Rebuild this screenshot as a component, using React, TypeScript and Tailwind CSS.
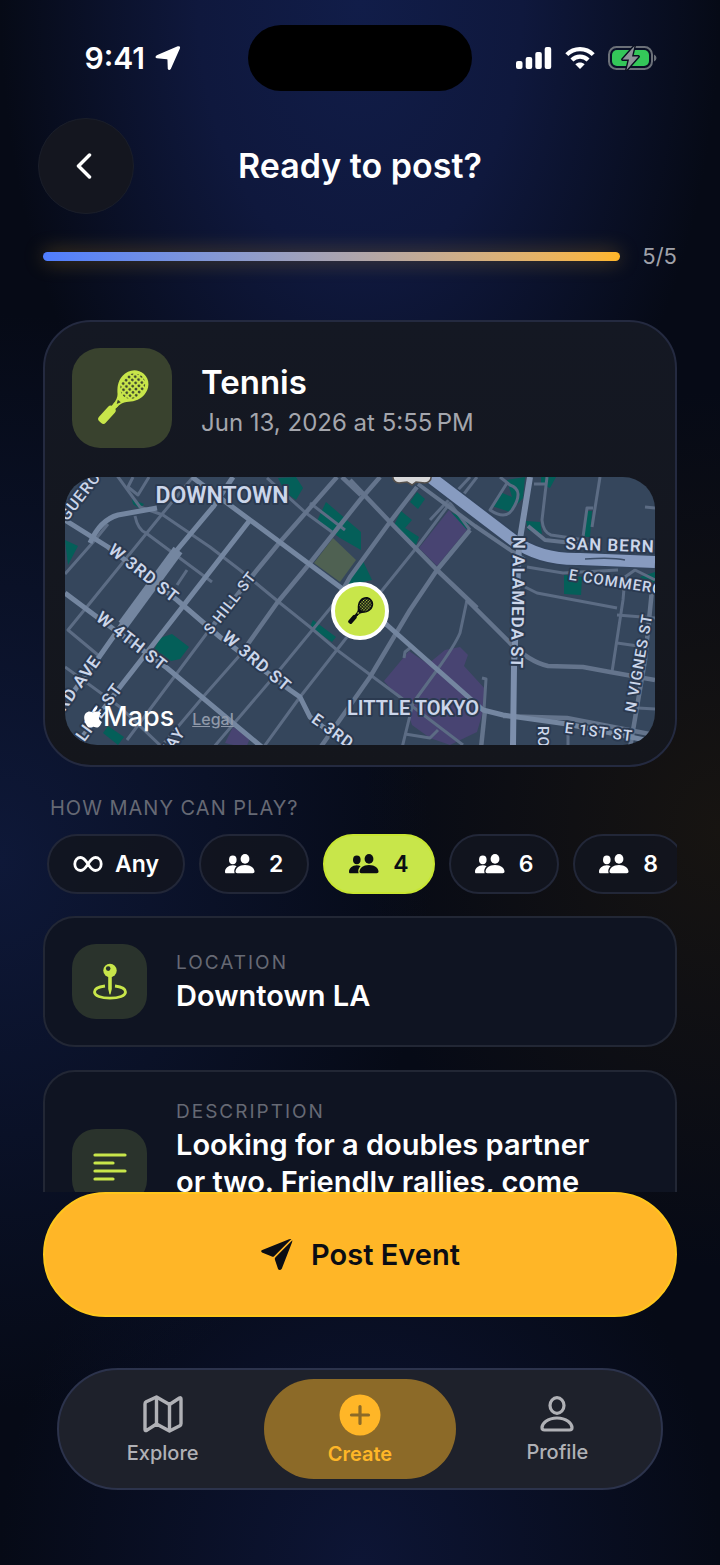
import { useId, useState } from 'react'
import type { ReactNode } from 'react'
import { FaApple } from 'react-icons/fa'

interface IconProps {
  className?: string
}

interface RoadLabel {
  text: string
  x: number
  y: number
  angle: number
  size: number
  weight?: number
}

const MINOR_ROADS = [
  'M113 470 L140 507 L163 515 L210 547 L240 570 L280 603 L310 627 L337 650 L400 697 L463 745',
  'M65 667 L120 707 L163 748',
  'M193 477 L163 513 L90 603 L68 630 L98 655',
  'M257 570 L207 633 L127 740',
  'M240 655 L203 697 L160 748',
  'M337 600 L277 673 L213 748',
  'M347 637 L300 697 L263 748',
  'M65 574 L95 540 L108 524',
  'M149 477 L138 495 L128 487 L133 477',
  'M135 516 Q138 530 146 533 L212 582',
  'M177 585 L187 570',
  'M267 478 L306 513 L332 532',
  'M310 503 L345 530',
  'M380 593 L417 547 L450 503 L470 530',
  'M467 600 L460 633 Q455 645 437 670 L413 703 L402 748',
  'M525 587 L537 593 L617 608',
  'M527 567 L563 573 L618 570',
  'M547 477 L542 520 Q543 532 551 535 L585 540',
  'M600 477 L592 527',
  'M583 537 L587 508 L593 508',
  'M507 483 L490 510 Q505 520 512 510 Q525 490 510 485 L500 477',
  'M534 484 L546 484',
  'M477 477 L457 503',
  'M655 580 L635 570 L625 577 L623 600 L612 672',
  'M617 615 L655 618',
  'M617 643 L645 647',
  'M638 708 L655 709',
  'M568 730 L568 745',
  'M405 734 L430 738 L438 730',
  'M404 658 L405 652 L410 648',
  'M482 678 L486 679 L484 710',
  'M645 507 L655 508',
  'M470 477 L430 520',
]

const STREETS = [
  'M337 477 L280 542 L257 570 L207 633',
  'M380 477 L360 500 L310 563 L277 603 L240 655',
  'M417 487 L390 522 L350 577 L337 600',
  'M470 530 L437 570 L410 610 L370 677 L320 748',
  'M350 480 L390 522 L437 570 L477 608',
  'M467 600 L510 643 Q530 662 548 666 L583 667 L610 672 L655 680',
  'M342 477 L361 495',
  'M652 590 L645 660 L630 748',
  'M485 710 L481 748',
  'M503 716 L567 718 L655 735',
]

const MAIN_ROADS = [
  'M65 520 L108 547 L177 600 L220 637 L290 690 L300 697 L310 717 L360 755',
  'M192 477 L223 500 L250 520 L340 587 L387 625 L483 710 L503 715 L567 724 L655 742',
  'M65 593 L97 617 L167 668 L263 748',
  'M233 477 L213 507 L177 550',
  'M250 520 L180 610 L120 687 L80 740',
  'M90 543 Q100 520 118 515 L157 508',
  'M123 623 L97 660 L60 710',
]

const GREENS = [
  'M278 478 L296 477 L303 488 L296 500 L285 492 Z',
  'M326 502 L361 532 L361 550 L340 538 L317 521 Z',
  'M362 559 L372 580 L345 586 Z',
  'M417 492 L425 499 L418 509 L410 502 Z',
  'M401 511 L412 520 L405 528 L419 537 L416 545 L394 525 Z',
  'M507 480 L525 477 L523 498 L510 512 L492 506 L500 492 L512 497 Z',
  'M450 512 L470 520 L466 530 Z',
  'M526 521 L540 522 L542 534 L528 530 Z',
  'M541 477 L556 477 L550 488 L541 484 Z',
  'M586 511 L592 511 L590 537 L582 537 Z',
  'M564 575 L582 577 L581 595 L564 594 Z',
  'M172 634 L189 647 L180 659 L171 661 L154 650 L160 638 Z',
  'M313 620 L336 637 L332 642 L310 627 Z',
  'M108 726 L124 737 L118 745 L103 733 Z',
  'M132 499 L144 504 L140 509 L133 504 Z',
  'M65 540 L78 546 L68 565 Z',
  'M640 577 L655 572 L655 590 Z',
]

const PURPLES = [
  'M449 510 L467 530 L437 566 L419 548 Z',
  'M409 651 L428 664 L445 650 L460 647 L468 655 L464 666 L486 690 L484 708 L477 732 L450 745 L430 738 L412 725 L405 705 L384 681 Z',
  'M233 727 L250 738 L246 748 L225 743 Z',
]

const ROAD_LABELS: RoadLabel[] = [
  { text: 'W 3RD ST', x: 144, y: 573, angle: 38, size: 17 },
  { text: 'W 4TH ST', x: 132, y: 641, angle: 38, size: 17 },
  { text: 'W 3RD ST', x: 257, y: 661, angle: 40, size: 17 },
  { text: 'E 3RD', x: 333, y: 731, angle: 36, size: 16 },
  { text: 'S HILL ST', x: 230, y: 603, angle: -52, size: 15, weight: 500 },
  { text: 'GUERO', x: 80, y: 496, angle: -52, size: 16, weight: 500 },
  { text: 'RD AVE', x: 78, y: 683, angle: -54, size: 17 },
  { text: 'LIVE ST', x: 99, y: 712, angle: -54, size: 17, weight: 500 },
  { text: 'WAY', x: 171, y: 744, angle: -54, size: 16, weight: 500 },
  { text: 'N ALAMEDA ST', x: 518, y: 603, angle: 91, size: 17 },
  { text: 'SAN BERN.', x: 613, y: 545, angle: 2, size: 17 },
  { text: 'E COMMERC', x: 616, y: 582, angle: 9, size: 15, weight: 500 },
  { text: 'N VIGNES ST', x: 639, y: 663, angle: -80, size: 15, weight: 500 },
  { text: 'E 1ST ST', x: 599, y: 732, angle: 7, size: 15, weight: 500 },
  { text: 'RO', x: 543, y: 737, angle: 90, size: 15, weight: 500 },
]

function TennisRacket({ className = '' }: IconProps) {
  const id = useId()
  return (
    <svg viewBox="0 0 52 52" className={`overflow-visible ${className}`} fill="currentColor" aria-hidden="true">
      <defs>
        <pattern id={`${id}grid`} width="4.4" height="4.4" x="23.8" y="7.8" patternUnits="userSpaceOnUse">
          <rect width="4.4" height="4.4" fill="white" />
          <circle cx="2.2" cy="2.2" r="1.35" fill="black" />
        </pattern>
        <mask id={`${id}mask`} x="-20" y="-20" width="92" height="92" maskUnits="userSpaceOnUse">
          <rect x="-20" y="-20" width="92" height="92" fill="white" />
          <ellipse cx="26" cy="10" rx="11.5" ry="13.5" fill={`url(#${id}grid)`} />
          <path d="M24 30 H28 L26 34 Z" fill="black" />
        </mask>
      </defs>
      <g transform="rotate(42 26 26)">
        <g mask={`url(#${id}mask)`}>
          <path d="M26 -6.5 C35 -6.5 40.5 1 40.5 9 C40.5 17 36 22 32 26 C30 28 28.5 32 28.5 37 H23.5 C23.5 32 22 28 20 26 C16 22 11.5 17 11.5 9 C11.5 1 17 -6.5 26 -6.5 Z" />
        </g>
        <rect x="23.5" y="34" width="5" height="6" />
        <rect x="21.5" y="38.5" width="9" height="20" rx="3.2" />
      </g>
    </svg>
  )
}

function PeopleIcon({ className }: IconProps) {
  return (
    <svg viewBox="0 0 30 20" className={className} fill="currentColor" aria-hidden="true">
      <ellipse cx="7.8" cy="5.8" rx="3.8" ry="4.4" />
      <path d="M9.6 19.2 H1.3 C.5 19.2 0 18.700 0 17.900 C0 14.300 3.200 11.300 7.800 11.300 C9.300 11.300 10.600 11.600 11.600 12.200 C9.800 13.700 8.600 16.200 9.600 19.200 Z" />
      <ellipse cx="20" cy="4.900" rx="4.400" ry="4.900" />
      <path d="M12.300 19.200 C11.200 19.200 10.500 18.600 10.500 17.600 C10.500 14.400 14.100 11 20 11 C25.900 11 29.500 14.400 29.500 17.600 C29.500 18.600 28.800 19.200 27.700 19.200 Z" />
    </svg>
  )
}

function InfinityIcon({ className }: IconProps) {
  return (
    <svg viewBox="0 0 30 18" className={className} fill="none" stroke="currentColor" strokeWidth="2.800" aria-hidden="true">
      <path d="M15 9 C12.500 5 10.500 2.500 7.600 2.500 C4.300 2.500 1.800 5.300 1.800 9 C1.800 12.700 4.300 15.500 7.600 15.500 C10.500 15.500 12.500 13 15 9 C17.500 5 19.500 2.500 22.400 2.500 C25.700 2.500 28.200 5.300 28.200 9 C28.200 12.700 25.700 15.500 22.400 15.500 C19.500 15.500 17.500 13 15 9 Z" />
    </svg>
  )
}

function PinIcon({ className }: IconProps) {
  return (
    <svg viewBox="0 0 34 38" className={className} aria-hidden="true">
      <path
        d="M12 23 C5.500 23.800 1.500 26 1.500 29 C1.500 32.800 8 35.200 17 35.200 C26 35.200 32.500 32.800 32.500 29 C32.500 26 28.500 23.800 22 23"
        fill="none"
        stroke="currentColor"
        strokeWidth="2.800"
      />
      <path d="M15.200 12 H18.800 V26 L17.600 31 Q17 32 16.400 31 L15.200 26 Z" fill="currentColor" />
      <circle cx="17" cy="7.500" r="6.700" fill="currentColor" />
      <circle cx="15.200" cy="5.600" r="2.300" fill="#2a332c" />
    </svg>
  )
}

function TextLinesIcon({ className }: IconProps) {
  return (
    <svg viewBox="0 0 34 30" className={className} stroke="currentColor" strokeWidth="3.200" strokeLinecap="round" aria-hidden="true">
      <path d="M2 3 H32 M2 11 H20 M2 19 H32 M2 27 H20" />
    </svg>
  )
}

function PaperPlane({ className }: IconProps) {
  return (
    <svg viewBox="92 175 100 100" className={className} fill="currentColor" aria-hidden="true">
      <path d="M97 212 L180 179 Q184 177 187 178 L134 231 Q131 233 128 231 L98 219 Q93 215 97 212 Z" />
      <path d="M190 182 Q190 186 188 191 L158 268 Q153 275 147 270 L137 240 Q136 236 139 233 Z" />
    </svg>
  )
}

function MapIcon({ className }: IconProps) {
  return (
    <svg viewBox="0 0 40 38" className={className} fill="none" stroke="currentColor" strokeWidth="3.400" strokeLinejoin="round" aria-hidden="true">
      <path d="M2 9 Q2 7.500 3.200 6.800 L13.500 2 L26.500 9.500 L36.500 3 Q38 2.300 38 4 V28.500 Q38 30 36.800 30.700 L26.500 36 L13.500 29 L4 35.200 Q2 36.200 2 34.500 Z" />
      <path d="M13.500 2 V29 M26.500 9.500 V36" />
    </svg>
  )
}

function CreateIcon({ className }: IconProps) {
  return (
    <svg viewBox="0 0 42 42" className={className} aria-hidden="true">
      <circle cx="21" cy="21" r="20.500" fill="currentColor" />
      <path d="M21 12.500 V29.500 M12.500 21 H29.500" stroke="#8c6a28" strokeWidth="3.200" strokeLinecap="round" />
    </svg>
  )
}

function ProfileIcon({ className }: IconProps) {
  return (
    <svg viewBox="0 0 34 36" className={className} fill="none" stroke="currentColor" strokeWidth="3.200" aria-hidden="true">
      <ellipse cx="17" cy="9.500" rx="7" ry="7.800" />
      <path d="M4.500 34 C2.800 34 2 33.200 2 31.800 C2 27.500 7.500 22 17 22 C26.500 22 32 27.500 32 31.800 C32 33.200 31.200 34 29.500 34 Z" />
    </svg>
  )
}

function StatusBar() {
  return (
    <div className="grid grid-cols-[1fr_224px_1fr] items-center pt-[25px]">
      <div className="flex items-center justify-end gap-2.5 pr-[67px]">
        <span className="text-[30px] font-semibold leading-9">9:41</span>
        <svg viewBox="0 0 26 26" className="h-[26px] w-[26px]" fill="currentColor" stroke="currentColor" strokeWidth="1.500" strokeLinejoin="round" aria-label="Location in use">
          <path d="M23 2 Q24.800 1.500 24.200 3.200 L15.200 23.500 Q14 25 13.500 23.500 L13.200 14.500 Q13.200 13.500 12 13.400 L2 12.600 Q.5 12 2 11 Z" />
        </svg>
      </div>
      <div className="h-[66px] rounded-full bg-black" />
      <div className="flex items-center gap-[13px] pl-11">
        <svg viewBox="0 0 36 24" className="h-6 w-9" fill="currentColor" aria-label="Signal">
          <rect x="0" y="15" width="6.500" height="8" rx="2" />
          <rect x="9.700" y="11" width="6.500" height="12" rx="2" />
          <rect x="19.300" y="6" width="6.500" height="17" rx="2" />
          <rect x="28.700" y="1" width="6.500" height="22" rx="2" />
        </svg>
        <svg viewBox="0 0 30 24" className="h-6 w-[30px]" aria-label="Wi-Fi">
          <g fill="none" stroke="currentColor" strokeWidth="4.200">
            <path d="M1.800 8.600 C9 1.200 21 1.200 28.200 8.600" />
            <path d="M6.900 14 C11.500 9.400 18.500 9.400 23.100 14" />
          </g>
          <path d="M15 23 L10.300 18.300 C13 15.900 17 15.900 19.700 18.300 Z" fill="currentColor" />
        </svg>
        <svg viewBox="0 0 49 26" className="h-[26px] w-[49px]" aria-label="Battery charging">
          <rect x="1" y="2" width="43" height="22" rx="7.500" fill="none" stroke="#6b7078" strokeWidth="2" />
          <path d="M46 9.500 Q48.500 10.500 48.500 13 Q48.500 15.500 46 16.500 Z" fill="#6b7078" />
          <rect x="4" y="5" width="37" height="16" rx="5" fill="#34c759" />
          <path d="M26.500 1 L14.500 14.500 H21 L18.500 25 L30.500 11.500 H24 Z" fill="#8e9299" stroke="#0a0f20" strokeWidth="2.800" paintOrder="stroke" strokeLinejoin="round" />
        </svg>
      </div>
    </div>
  )
}

function CityMap() {
  return (
    <div className="relative overflow-hidden rounded-[32px]">
      <svg viewBox="65 477 590 268" className="block w-full" fill="none" role="img" aria-label="Map of Downtown LA">
        <rect x="65" y="477" width="590" height="268" fill="#35465c" />
        <g fill="#045f59">
          {GREENS.map((d) => <path key={d} d={d} />)}
        </g>
        <g fill="#484472">
          {PURPLES.map((d) => <path key={d} d={d} />)}
        </g>
        <path d="M333 538 L356 560 L340 582 L314 563 Z" fill="#4f6152" />
        <g strokeLinejoin="round">
          <g stroke="#5c6c84" strokeWidth="3">
            {MINOR_ROADS.map((d) => <path key={d} d={d} />)}
          </g>
          <g stroke="#64748c" strokeWidth="4.500">
            {STREETS.map((d) => <path key={d} d={d} />)}
          </g>
          <g stroke="#7486a0" strokeWidth="5">
            {MAIN_ROADS.map((d) => <path key={d} d={d} />)}
          </g>
          <path d="M178 550 L123 625" stroke="#7486a0" strokeWidth="11" />
          <path d="M418 484 L475 526 L525 560 M528 526 L545 540 L590 545" stroke="#64748c" strokeWidth="4" />
          <path d="M425 473 L513 540 Q540 560 580 559 L655 562" stroke="#33445c" strokeWidth="15" />
          <path d="M425 473 L513 540 Q540 560 580 559 L655 562" stroke="#879bc0" strokeWidth="12" />
          <path d="M585 559 Q612 557 625 560" stroke="#3d4f6a" strokeWidth="1.500" />
          <path d="M530 477 L519 545 L514 667 L513 745" stroke="#7d8fac" strokeWidth="6" />
        </g>
        <path d="M393 475 H431 Q432 482 425 483 L416 482 L412 485 L407 482 L399 483 Q392 482 393 475 Z" fill="#d8d8da" stroke="#55504c" strokeWidth="1.500" />
        <g
          fill="#ccd6ea"
          stroke="#2b3a50"
          strokeWidth="4"
          strokeLinejoin="round"
          paintOrder="stroke"
          textAnchor="middle"
          dominantBaseline="central"
          fontFamily="Roboto, sans-serif"
        >
          {ROAD_LABELS.map((label) => (
            <text
              key={`${label.text}-${label.x}`}
              transform={`translate(${label.x} ${label.y}) rotate(${label.angle})`}
              fontSize={label.size}
              fontWeight={label.weight ?? 600}
              letterSpacing="1"
            >
              {label.text}
            </text>
          ))}
          <text x="222" y="495" fontSize="23" fontWeight="600">DOWNTOWN</text>
          <text x="413" y="708" fontSize="20" fontWeight="600">LITTLE TOKYO</text>
        </g>
      </svg>
      <div className="absolute bottom-3 left-[18px] flex items-center gap-[18px]">
        <span className="flex items-center text-[27px] font-medium leading-8">
          <FaApple className="h-6 w-5" />
          Maps
        </span>
        <a href="#legal" className="pt-1 text-base font-medium leading-5 text-[#8f99a9] underline">Legal</a>
      </div>
      <div className="absolute left-1/2 top-1/2 flex h-[58px] w-[58px] -translate-x-1/2 -translate-y-1/2 items-center justify-center rounded-full border-4 border-white bg-[#c8e64a] text-[#0a0c10]">
        <TennisRacket className="h-[26px] w-[26px]" />
      </div>
    </div>
  )
}

function DetailCard({ icon, label, children }: { icon: ReactNode; label: string; children: ReactNode }) {
  return (
    <section className="flex items-center gap-[29px] rounded-[32px] border-2 border-[#222735] bg-[#0f1422] px-[27px] py-[26px]">
      <div className="flex h-[75px] w-[75px] shrink-0 items-center justify-center rounded-3xl bg-[#2a332c] text-[#c8e64a]">
        {icon}
      </div>
      <div className="min-w-0 flex-1 pr-9">
        <h2 className="text-[19px] leading-7 tracking-[2px] text-[#666974]">{label}</h2>
        {children}
      </div>
    </section>
  )
}

const PLAYER_OPTIONS = ['Any', '2', '4', '6', '8']

export default function App() {
  const [players, setPlayers] = useState('4')

  return (
    <div className="flex h-screen flex-col overflow-hidden bg-[#060a16] bg-[radial-gradient(ellipse_50%_38%_at_50%_0%,#111d49_0%,#0f183d_45%,transparent_100%),radial-gradient(ellipse_60%_35%_at_0%_55%,#0e1838_0%,transparent_100%),radial-gradient(ellipse_50%_28%_at_100%_53%,#171411_0%,transparent_100%),radial-gradient(ellipse_50%_28%_at_50%_100%,#0d1535_0%,transparent_100%)] font-['Inter','Liberation_Sans',sans-serif] text-white">
      <StatusBar />

      <header className="mt-[27px] grid grid-cols-[96px_1fr_96px] items-center px-[38px]">
        <button
          type="button"
          aria-label="Back"
          className="flex h-24 w-24 items-center justify-center rounded-full border border-[#1a1e2a] bg-[#14161f]"
        >
          <svg viewBox="0 0 16 26" className="mr-1 h-[26px] w-4" fill="none" stroke="currentColor" strokeWidth="3.500" strokeLinecap="round" strokeLinejoin="round" aria-hidden="true">
            <path d="M13.500 2 L2.500 13 L13.500 24" />
          </svg>
        </button>
        <h1 className="text-center text-[34px] font-semibold leading-10">Ready to post?</h1>
      </header>

      <div className="mt-7 flex items-center gap-[22px] px-[43px]">
        <div
          role="progressbar"
          aria-label="Step"
          aria-valuenow={5}
          aria-valuemax={5}
          className="h-[9px] flex-1 rounded-full bg-linear-to-r from-[#4f7dff] to-[#ffb627] shadow-[0_0_20px_rgba(255,182,39,0.35)]"
        />
        <span className="text-[22px] leading-7 text-[#a0a2aa]">5/5</span>
      </div>

      <main className="mt-[50px] min-h-0 flex-1 overflow-y-auto px-[43px] [scrollbar-width:none]">
        <section className="rounded-[48px] border-2 border-[#242a40] bg-linear-to-b from-[#141823] to-[#14161c] px-5 pb-5 pt-[26px]">
          <div className="flex items-center gap-[29px] px-[7px]">
            <div className="flex h-[100px] w-[100px] items-center justify-center rounded-[28px] bg-[#39422e] text-[#c8e64a]">
              <TennisRacket className="h-[52px] w-[52px]" />
            </div>
            <div className="pt-1.5">
              <h2 className="text-[33px] font-semibold leading-[42px]">Tennis</h2>
              <p className="mt-0.5 text-2xl leading-9 text-[#a4a6ad]">Jun 13, 2026 at 5:55{'\u202f'}PM</p>
            </div>
          </div>
          <div className="mt-[29px]">
            <CityMap />
          </div>
        </section>

        <h2 className="mt-[25px] pl-[7px] text-xl leading-8 tracking-[1px] text-[#666974]">HOW MANY CAN PLAY?</h2>

        <div className="mt-[10px] flex gap-3.5 overflow-x-auto pl-1 [scrollbar-width:none]">
          {PLAYER_OPTIONS.map((option) => (
            <button
              key={option}
              type="button"
              aria-pressed={players === option}
              onClick={() => setPlayers(option)}
              className={`flex h-[60px] shrink-0 items-center rounded-full border-2 px-6 text-[23px] font-semibold ${
                option === 'Any' ? 'gap-3' : 'gap-3.5'
              } ${
                players === option
                  ? 'border-[#c8e632] bg-[#c8e64a] text-[#0b0e14]'
                  : 'border-[#222738] bg-[#12151f]/90 text-white'
              }`}
            >
              {option === 'Any' ? <InfinityIcon className="h-[18px] w-[30px]" /> : <PeopleIcon className="h-5 w-[30px]" />}
              {option}
            </button>
          ))}
        </div>

        <div className="mt-[22px] space-y-[23px]">
          <DetailCard label="LOCATION" icon={<PinIcon className="h-[38px] w-[34px]" />}>
            <p className="text-[29px] font-semibold leading-[37px]">Downtown LA</p>
          </DetailCard>
          <DetailCard label="DESCRIPTION" icon={<TextLinesIcon className="h-[30px] w-[34px]" />}>
            <p className="pb-[35px] text-[29px] font-semibold leading-[37px]">
              Looking for a doubles partner or two. Friendly rallies, come
            </p>
          </DetailCard>
        </div>
      </main>

      <div className="px-[43px]">
        <button
          type="button"
          className="flex h-[125px] w-full items-center justify-center gap-[18px] rounded-full border-2 border-[#ffc61c] bg-[#ffb627] text-[29px] font-semibold text-[#0b0d14]"
        >
          <PaperPlane className="h-[33px] w-[33px]" />
          Post Event
        </button>
      </div>

      <nav className="mx-[57px] mb-[75px] mt-[51px] grid grid-cols-3 gap-1.5 rounded-full border-2 border-[#2c334c] bg-[#1e212b] px-2 py-[9px] text-xl font-medium text-[#b0b1b6]">
        <a href="#explore" className="flex h-[100px] flex-col items-center justify-center gap-1.5 rounded-full pt-1">
          <MapIcon className="h-[38px] w-10" />
          <span className="leading-7">Explore</span>
        </a>
        <a href="#create" aria-current="page" className="flex h-[100px] flex-col items-center justify-center gap-1 rounded-full bg-[#8c6a28] pt-1 font-semibold text-[#ffb627]">
          <CreateIcon className="h-[42px] w-[42px]" />
          <span className="leading-7">Create</span>
        </a>
        <a href="#profile" className="flex h-[100px] flex-col items-center justify-center gap-1.5 rounded-full pt-1">
          <ProfileIcon className="h-9 w-[34px]" />
          <span className="leading-7">Profile</span>
        </a>
      </nav>
    </div>
  )
}
